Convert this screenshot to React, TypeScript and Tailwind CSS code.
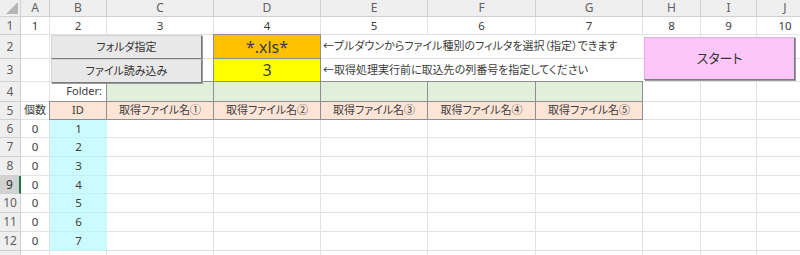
import React from 'react';

const letters = ['A', 'B', 'C', 'D', 'E', 'F', 'G', 'H', 'I', 'J'];
const grid = 'border-r border-b border-[#e2e2e2]';
const boxed = '-mt-px -ml-px border border-[#8f8f8f]';
const jp = '[font-feature-settings:"palt"]';

function Head({ children, active }: { children?: React.ReactNode; active?: boolean }) {
  return (
    <div
      className={`flex items-center justify-center text-[12px] text-[#5f5f5f] border-r border-b border-[#d0d0d0] ${
        active ? 'bg-[#d2d2d2] text-[#333] border-r-2 border-r-[#217346]' : 'bg-[#efefef]'
      }`}
    >
      {children}
    </div>
  );
}

function Cell({ children, className = '' }: { children?: React.ReactNode; className?: string }) {
  return <div className={`flex items-center justify-center text-[11.5px] text-[#3c3c3c] ${className}`}>{children}</div>;
}

export default function App() {
  const data = [1, 2, 3, 4, 5, 6, 7];

  return (
    <div className="relative w-[800px] h-[255px] overflow-hidden bg-white font-['Noto_Sans','Noto_Sans_CJK_JP',sans-serif]">
      <div className="grid grid-cols-[21px_29px_57px_107px_107px_107px_108px_107px_58px_56px_57px] grid-rows-[17px_18px_24px_23px_20px_18px_18px_19px_19px_18px_19px_19px_19px_19px]">
        {/* column headers */}
        <div className="relative bg-[#efefef] border-r border-b border-[#d0d0d0]">
          <div className="absolute right-[2px] bottom-[2px] w-0 h-0 border-l-[12px] border-l-transparent border-b-[12px] border-b-[#b5b5b5]" />
        </div>
        {letters.map((l) => (
          <Head key={l}>{l}</Head>
        ))}

        {/* row 1 */}
        <Head>1</Head>
        {letters.map((l, i) => (
          <Cell key={l} className={grid}>
            {i + 1}
          </Cell>
        ))}

        {/* row 2 */}
        <Head>2</Head>
        <Cell className={grid} />
        <Cell className={grid} />
        <Cell className={grid} />
        <Cell className={`${boxed} bg-[#ffc000] text-[16px] text-[#3a3a3a]`}>*.xls*</Cell>
        <Cell className={`col-span-3 justify-start pl-[2px] border-b border-[#e2e2e2] text-[11px] ${jp}`}>
          ←プルダウンからファイル種別のフィルタを選択（指定）できます
        </Cell>
        <Cell className={grid} />
        <Cell className={grid} />
        <Cell className={grid} />

        {/* row 3 */}
        <Head>3</Head>
        <Cell className={grid} />
        <Cell className={grid} />
        <Cell className={grid} />
        <Cell className={`${boxed} bg-[#ffff00] text-[16px] text-[#3a3a3a]`}>3</Cell>
        <Cell className={`col-span-3 justify-start pl-[2px] border-b border-[#e2e2e2] text-[11px] ${jp}`}>
          ←取得処理実行前に取込先の列番号を指定してください
        </Cell>
        <Cell className={grid} />
        <Cell className={grid} />
        <Cell className={grid} />

        {/* row 4 */}
        <Head>4</Head>
        <Cell className={grid} />
        <Cell className={`${grid} justify-end pr-[4px] text-[11px]`}>Folder:</Cell>
        {[0, 1, 2, 3, 4].map((i) => (
          <Cell key={i} className={`${boxed} bg-[#e2efda]`} />
        ))}
        <Cell className={grid} />
        <Cell className={grid} />
        <Cell className={grid} />

        {/* row 5 */}
        <Head>5</Head>
        <Cell className={`${grid} text-[11px]`}>個数</Cell>
        <Cell className={`${boxed} bg-[#fce4d6] text-[11px]`}>ID</Cell>
        {['①', '②', '③', '④', '⑤'].map((n) => (
          <Cell key={n} className={`${boxed} bg-[#fce4d6] text-[11px] ${jp}`}>
            取得ファイル名{n}
          </Cell>
        ))}
        <Cell className={grid} />
        <Cell className={grid} />
        <Cell className={grid} />

        {/* rows 6-12 */}
        {data.map((n) => (
          <React.Fragment key={n}>
            <Head active={n === 4}>{n + 5}</Head>
            <Cell className={grid}>0</Cell>
            <Cell className="bg-[#ccfbff] border-b border-[#c4f0f4]">{n}</Cell>
            {[0, 1, 2, 3, 4, 5, 6, 7].map((i) => (
              <Cell key={i} className={grid} />
            ))}
          </React.Fragment>
        ))}

        {/* row 13 (only its top edge is in view) */}
        <Head />
        {letters.map((l) => (
          <Cell key={l} className={grid} />
        ))}
      </div>

      {/* form buttons floating over the sheet */}
      <button className={`absolute left-[51px] top-[35px] w-[151px] h-[24px] bg-[#e8e8e8] border border-[#d4d4d4] border-r-[#7c7c7c] border-b-[#7c7c7c] shadow-[1px_1px_0_#9a9a9a] text-[11px] text-[#333] ${jp}`}>
        フォルダ指定
      </button>
      <button className={`absolute left-[51px] top-[59px] w-[151px] h-[24px] bg-[#e8e8e8] border border-[#d4d4d4] border-r-[#7c7c7c] border-b-[#7c7c7c] shadow-[1px_1px_0_#9a9a9a] text-[11px] text-[#333] ${jp}`}>
        ファイル読み込み
      </button>
      <button className={`absolute left-[644px] top-[37px] w-[151px] h-[43px] bg-[#fdc6fa] border border-[#e0b0dc] border-r-[#7c7c7c] border-b-[#7c7c7c] shadow-[1px_1px_0_#9a9a9a] text-[13px] text-[#333] ${jp}`}>
        スタート
      </button>
    </div>
  );
}
